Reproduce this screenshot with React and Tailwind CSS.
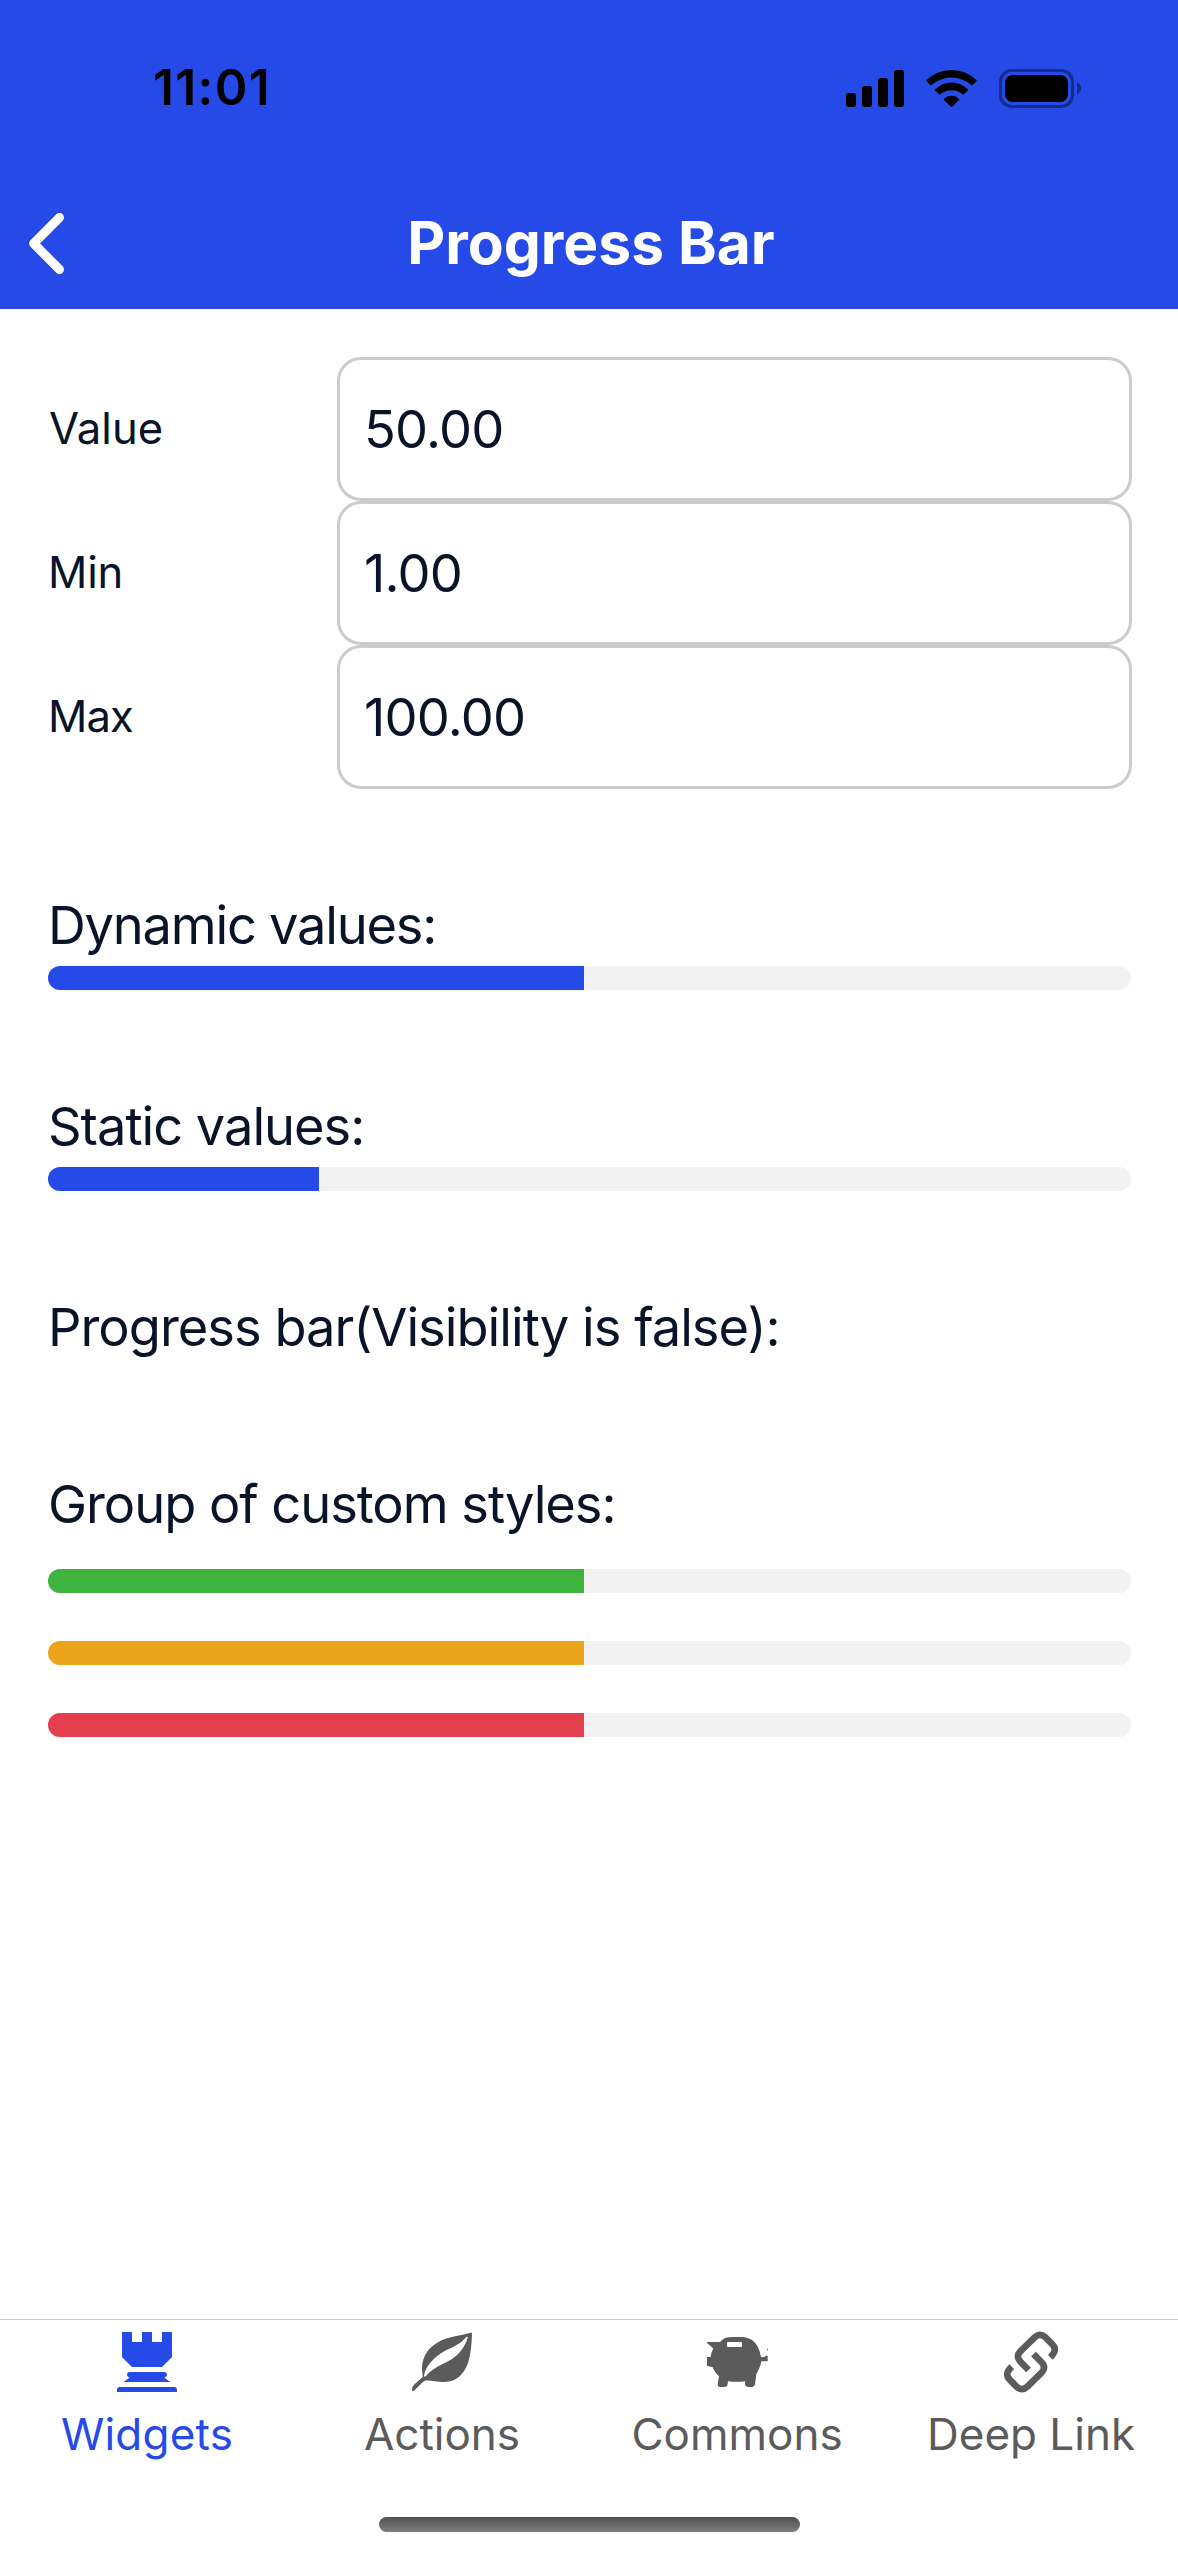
import React from "react";

function StatusIcons() {
  return (
    <svg className="h-[39px] w-[236px]" viewBox="198 84 708 117" fill="#000">
      <rect x="198" y="156" width="30" height="42" rx="8" />
      <rect x="246" y="135" width="30" height="63" rx="8" />
      <rect x="294" y="111" width="30" height="87" rx="8" />
      <rect x="342" y="87" width="30" height="111" rx="8" />
      <path d="M440 121Q438 119 440 117A107 107 0 0 1 589 117Q591 119 589 121L578 132Q576 134 574 132A90 90 0 0 0 455 132Q453 134 451 132Z" />
      <path d="M466 149Q464 147 466 145A68 68 0 0 1 563 145Q565 147 563 149L552 160Q550 162 548 160A52 52 0 0 0 481 160Q479 162 477 160Z" />
      <path d="M492 177Q490 175 492 173A34 34 0 0 1 537 173Q539 175 537 177L516.500 197Q514.500 199 512.500 197Z" />
      <g opacity="0.4">
        <rect x="661.500" y="88.500" width="216" height="108" rx="34" fill="none" stroke="#000" strokeWidth="9" />
        <path d="M891 124Q903 130 903 142Q903 154 891 160Z" />
      </g>
      <rect x="675" y="102" width="189" height="81" rx="23" />
    </svg>
  );
}

function RookIcon() {
  return (
    <svg className="size-[84px]" viewBox="0 0 252 252" fill="currentColor">
      <path d="M51 36H81V66H111V36H141V66H171V36H201V111L171 141H81L51 111Z" />
      <path d="M73 156H179Q186 157 186 164Q186 170 178 173L196 186H55L74 173Q66 170 66 164Q66 157 73 156Z" />
      <path d="M43 201H209Q216 202 216 209V216H36V209Q36 202 43 201Z" />
    </svg>
  );
}

function LeafIcon() {
  return (
    <svg className="size-[84px]" viewBox="0 0 252 252" fill="currentColor" fillRule="evenodd">
      <path d="M212 38C190 45 148 49 122 62C90 78 66 105 66 145C66 155 68 162 68 171L42 194C37 199 36 206 36 211Q38 215 42 212L68 187Q73 182 79 181C105 184 130 189 154 183C178 176 196 154 205 126C213 98 215 70 216 41Q215 37 212 38ZM199 51Q204 49 203 54C196 76 181 101 156 117C133 132 98 142 78 168Q73 173 72 167C77 137 102 112 130 95C157 81 181 73 199 51Z" />
    </svg>
  );
}

function PiggyIcon() {
  return (
    <svg className="size-[84px]" viewBox="-3 0 252 252" fill="currentColor" fillRule="evenodd">
      <path d="M33 66H72C79 59 86 52 105 51H135C174 51 190 80 195 111Q205 113 210 107Q213 106 215 109V124H196C194 140 186 153 181 162L177 193Q176 201 169 201H155Q148 201 147 193V184Q122 187 96 184L95 193Q94 201 87 201H72Q65 201 65 193L69 169C59 160 54 151 50 142Q42 139 33 138V111H44C45 100 48 93 52 86Q43 77 33 69ZM96 66Q93 66 93 69V78Q93 81 96 81H135Q138 81 138 78V69Q138 66 135 66Z" />
      <path d="M212 87L215 85V92Q213 92 212 87Z" />
    </svg>
  );
}

function LinkIcon() {
  return (
    <svg className="size-[84px]" viewBox="-3 0 252 252" fill="none" stroke="currentColor" strokeWidth="20">
      <path d="M115.500 150L92 126C81 115 81 104 91 94L134 52C144 42 155 42 165 51L187 73C198 84 198 95 181 112" />
      <path d="M130.500 102L154 126C165 137 165 148 155 158L112 200C102 210 91 210 81 201L59 179C48 168 48 157 65 140" />
    </svg>
  );
}

function Field({ label, value, className }) {
  return (
    <div className="flex h-36 items-center">
      <div className={"w-[289px] text-[43.6px] " + className}>{label}</div>
      <div className="flex h-36 w-[795px] items-center rounded-3xl border-[3px] border-[#ccc] pl-6 text-[52.4px] tracking-[-0.8px]">
        {value}
      </div>
    </div>
  );
}

function Bar({ percent, color }) {
  return (
    <div className="h-6 w-[1083px] overflow-hidden rounded-full bg-[#f2f2f2]">
      <div className={"h-6 " + color} style={{ width: percent + "%" }} />
    </div>
  );
}

function Heading({ children, className }) {
  return <h2 className={"mt-[104px] h-16 text-[52.4px] leading-[64px] whitespace-nowrap " + className}>{children}</h2>;
}

function Tab({ icon, label, className }) {
  return (
    <div className={"flex flex-col items-center " + className}>
      {icon}
      <div className="text-[44px] leading-[60px] whitespace-nowrap">{label}</div>
    </div>
  );
}

export default function App() {
  return (
    <div className="flex h-[2556px] w-[1178px] flex-col overflow-hidden bg-white font-['Inter',sans-serif] text-[#0a1428]">
      <header className="h-[309px] bg-[#254ae7]">
        <div className="flex h-44 items-center justify-between pr-24 pl-[153px]">
          <div className="text-[49.5px] leading-none font-semibold tracking-[1.35px] text-black">11:01</div>
          <StatusIcons />
        </div>
        <div className="grid h-[133px] grid-cols-[1fr_auto_1fr] items-center pt-0.5">
          <svg className="ml-[29px] h-[61px] w-[35px]" viewBox="87 518.500 105 183" fill="none" stroke="#fff" strokeWidth="27" strokeLinecap="round" strokeLinejoin="round">
            <path d="M178.500 532L101 610L178.500 688" />
          </svg>
          <h1 className="pl-1 text-[58.7px] leading-none font-bold text-white">Progress Bar</h1>
        </div>
      </header>

      <main className="flex-1 pt-12 pl-12">
        <Field label="Value" value="50.00" className="pl-px" />
        <Field label="Min" value="1.00" className="tracking-[-0.2px]" />
        <Field label="Max" value="100.00" className="tracking-[-0.9px]" />

        <Heading className="tracking-[-1.22px]">Dynamic values:</Heading>
        <div className="mt-[9px]"><Bar percent={49.495} color="bg-[#254ae7]" /></div>

        <Heading className="tracking-[-1.01px]">Static values:</Heading>
        <div className="mt-[9px]"><Bar percent={25} color="bg-[#254ae7]" /></div>

        <Heading className="tracking-[-0.99px]">Progress bar(Visibility is false):</Heading>
        <div className="h-[9px]" />

        <Heading className="tracking-[-1.04px]">Group of custom styles:</Heading>
        <div className="mt-[33px] flex flex-col gap-12">
          <Bar percent={49.495} color="bg-[#3eb33e]" />
          <Bar percent={49.495} color="bg-[#eca41c]" />
          <Bar percent={49.495} color="bg-[#e43f4f]" />
        </div>
      </main>

      <footer className="h-[237px] border-t border-[#d0d0d0]">
        <nav className="grid grid-cols-[294px_296px_294px_294px] text-[#5b5b5b]">
          <Tab icon={<RookIcon />} label="Widgets" className="tracking-[0.19px] text-[#254ae7]" />
          <Tab icon={<LeafIcon />} label="Actions" className="" />
          <Tab icon={<PiggyIcon />} label="Commons" className="" />
          <Tab icon={<LinkIcon />} label="Deep Link" className="" />
        </nav>
        <div className="mx-auto mt-[53px] h-[15px] w-[421px] rounded-full bg-linear-to-b from-[#505050] to-[#7e7e7e]" />
      </footer>
    </div>
  );
}
